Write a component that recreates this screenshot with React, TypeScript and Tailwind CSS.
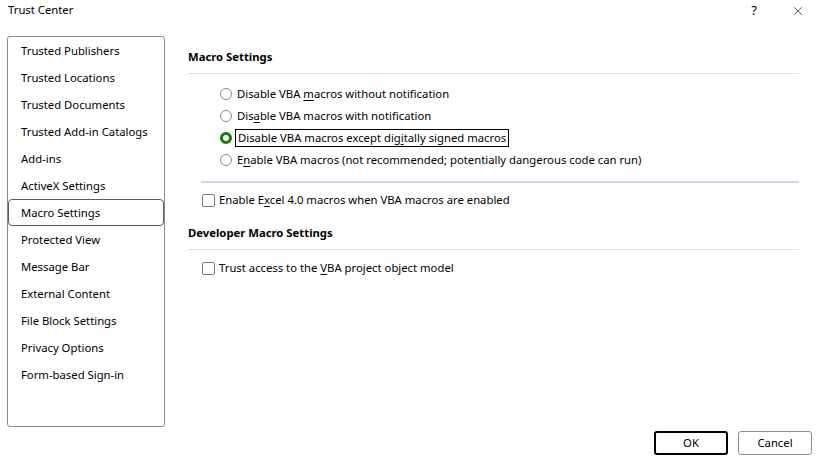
import { X } from "lucide-react";

const NAV_ITEMS = [
    "Trusted Publishers",
    "Trusted Locations",
    "Trusted Documents",
    "Trusted Add-in Catalogs",
    "Add-ins",
    "ActiveX Settings",
    "Macro Settings",
    "Protected View",
    "Message Bar",
    "External Content",
    "File Block Settings",
    "Privacy Options",
    "Form-based Sign-in",
];

const SELECTED = "Macro Settings";

// label split around the access-key letter: [before, key, after]
const RADIOS: { label: [string, string, string]; checked?: boolean }[] = [
    { label: ["Disable VBA ", "m", "acros without notification"] },
    { label: ["Dis", "a", "ble VBA macros with notification"] },
    { label: ["Disable VBA macros except dig", "i", "tally signed macros"], checked: true },
    { label: ["E", "n", "able VBA macros (not recommended; potentially dangerous code can run)"] },
];

function Label({ parts }: { parts: [string, string, string] }) {
    return (
        <span>
            {parts[0]}
            <span className="underline underline-offset-2">{parts[1]}</span>
            {parts[2]}
        </span>
    );
}

function Radio({ checked }: { checked?: boolean }) {
    if (checked) {
        return <span className="w-[12px] h-[12px] rounded-full border-[3px] border-[#107c10] bg-white shrink-0" />;
    }
    return <span className="w-[12px] h-[12px] rounded-full border border-[#8a8a8a] bg-white shrink-0" />;
}

function Checkbox() {
    return <span className="w-[13px] h-[13px] rounded-[2px] border border-[#7a7a7a] bg-white shrink-0" />;
}

export default function App() {
    return (
        <div
            className="w-[820px] h-[462px] bg-white text-black text-[11.3px] flex flex-col select-none overflow-hidden"
            style={{ fontFamily: '"Segoe UI", "Noto Sans", "Open Sans", sans-serif' }}
        >
            {/* Title bar */}
            <div className="h-[20px] flex items-center pl-[8px] pt-[1px]">
                <span className="flex-1">Trust Center</span>
                <span className="w-[12px] text-center text-[13px] mr-[31px]">?</span>
                <X size={14} strokeWidth={1.1} className="mr-[15px]" />
            </div>

            <div className="flex mt-[16px] pl-[7px]">
                {/* Left nav */}
                <div className="w-[158px] h-[391px] border border-[#8a8a9a] rounded-[3px] flex flex-col">
                    {NAV_ITEMS.map(item => (
                        <div
                            key={item}
                            className={
                                item === SELECTED
                                    ? "h-[27px] flex items-center pl-[12px] pt-[1px] border border-[#5a5a6a] rounded-[4px]"
                                    : "h-[27px] flex items-center pl-[12px] pt-[1px] border border-transparent"
                            }
                        >
                            {item}
                        </div>
                    ))}
                </div>

                {/* Content */}
                <div className="w-[611px] ml-[23px] pt-[11px] flex flex-col">
                    <div className="h-[20px] leading-[20px] font-bold">Macro Settings</div>
                    <div className="mt-[6px] h-px bg-[#dcdcea]" />

                    <div className="mt-[9px] flex flex-col">
                        {RADIOS.map((r, i) => (
                            <div key={i} className="h-[22px] flex items-center pl-[32px]">
                                <Radio checked={r.checked} />
                                {r.checked ? (
                                    <span className="ml-[3px] px-[2px] border border-black leading-[16px]">
                                        <Label parts={r.label} />
                                    </span>
                                ) : (
                                    <span className="ml-[5px]">
                                        <Label parts={r.label} />
                                    </span>
                                )}
                            </div>
                        ))}
                    </div>

                    <div className="mt-[10px] ml-[13px] h-[2px] bg-[#d4d4ee]" />

                    <div className="mt-[6px] h-[22px] flex items-center pl-[14px]">
                        <Checkbox />
                        <span className="ml-[4px]">
                            <Label parts={["Enable E", "x", "cel 4.0 macros when VBA macros are enabled"]} />
                        </span>
                    </div>

                    <div className="mt-[12px] h-[20px] leading-[20px] font-bold">Developer Macro Settings</div>
                    <div className="mt-[6px] h-px bg-[#dcdcea]" />

                    <div className="mt-[7px] h-[22px] flex items-center pl-[14px]">
                        <Checkbox />
                        <span className="ml-[4px]">
                            <Label parts={["Trust access to the ", "V", "BA project object model"]} />
                        </span>
                    </div>
                </div>
            </div>

            {/* Buttons */}
            <div className="mt-[4px] flex justify-end gap-[10px] pr-[8px]">
                <button className="w-[74px] h-[24px] border-2 border-black rounded-[3px] bg-white">OK</button>
                <button className="w-[74px] h-[24px] border border-[#8a8a9a] rounded-[3px] bg-white">Cancel</button>
            </div>
        </div>
    );
}
